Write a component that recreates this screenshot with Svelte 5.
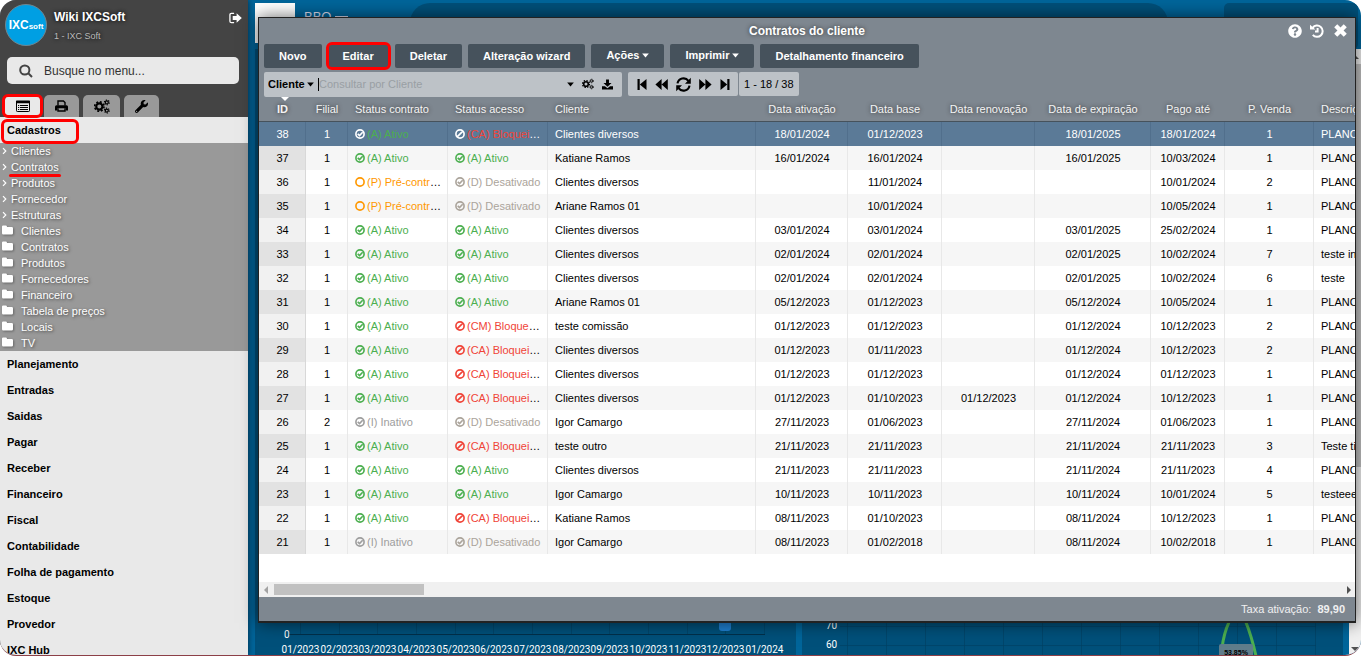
<script lang="ts">
  type Icon = { box: string; fill?: string; stroke?: string; width?: number };

  const icons: Record<string, Icon> = {
    signout: {
      box: "0 0 14 12",
      fill: "M4 3.8h4.2V.8L13.8 6l-5.6 5.2v-3H4z",
      stroke: "M5.5 1H2.6Q1 1 1 2.6v6.8Q1 11 2.6 11h2.9",
      width: 1.4,
    },
    search: { box: "0 0 14 14", stroke: "M10.4 6a4.6 4.6 0 1 1-9.2 0a4.6 4.6 0 0 1 9.2 0M9.3 9.3L13 13", width: 2 },
    list: {
      box: "0 0 14 12",
      fill: "M0 1.2Q0 .5.7.5h12.6q.7 0 .7.7v2H0zM2 5h1.2v1H2zM4 5h8v1H4zM2 7h1.2v1H2zM4 7h8v1H4zM2 9h1.2v1H2zM4 9h8v1H4z",
      stroke: "M.5 2v8.7q0 .8.8.8h11.4q.8 0 .8-.8V2",
      width: 1,
    },
    print: {
      box: "0 0 13 12",
      fill: "M0 6.8Q0 5.3 1.5 5.3h10Q13 5.3 13 6.8v3.6h-2.4V8.2H2.4v2.2H0z",
      stroke: "M3 5.5V1h5.4L10 2.6v2.9M3 8.2V11h7V8.2",
      width: 1.4,
    },
    wrench: {
      box: "0 0 512 512",
      fill: "M507.73 109.1c-2.24-9.03-13.54-12.09-20.12-5.51l-74.36 74.36-67.88-11.31-11.31-67.88 74.36-74.36c6.62-6.62 3.43-17.9-5.66-20.16-47.38-11.74-99.55.91-136.58 37.93-39.64 39.64-50.55 97.1-34.05 147.2L18.74 402.76c-24.99 24.99-24.99 65.51 0 90.5 24.99 24.99 65.51 24.99 90.5 0l213.21-213.21c50.12 16.71 107.47 5.68 147.37-34.22 37.07-37.07 49.7-89.32 37.91-136.73zM64 472c-13.25 0-24-10.75-24-24 0-13.26 10.75-24 24-24s24 10.74 24 24c0 13.25-10.75 24-24 24z",
    },
    chevron: { box: "0 0 5 8", stroke: "M1 1.2L3.8 4L1 6.8", width: 1.2 },
    folder: { box: "0 0 12 10", fill: "M0 1.2Q0 0 1.2 0h3q1 0 1.2 1.2V1.6h5.2Q12 1.6 12 3v5.6Q12 10 10.6 10H1.4Q0 10 0 8.6z" },
    caret: { box: "0 0 8 5", fill: "M.2.3h7.6L4 4.7z" },
    help: {
      box: "0 0 512 512",
      fill: "M504 256c0 136.997-111.043 248-248 248S8 392.997 8 256C8 119.083 119.043 8 256 8s248 111.083 248 248zM262.655 90c-54.497 0-89.255 22.957-116.549 63.758-3.536 5.286-2.353 12.415 2.715 16.258l34.699 26.31c5.205 3.947 12.621 3.008 16.665-2.122 17.864-22.658 30.113-35.797 57.303-35.797 20.429 0 45.698 13.148 45.698 32.958 0 14.976-12.363 22.667-32.534 33.976C247.128 238.528 216 254.941 216 296v4c0 6.627 5.373 12 12 12h56c6.627 0 12-5.373 12-12v-1.333c0-28.462 83.186-29.647 83.186-106.667 0-58.002-60.165-102-116.531-102zM256 338c-25.365 0-46 20.635-46 46 0 25.364 20.635 46 46 46s46-20.636 46-46c0-25.365-20.635-46-46-46z",
    },
    history: { box: "0 0 14 14", fill: "M0 .8L5.4 5.6H0z", stroke: "M2.6 3.8A5.6 5.6 0 1 1 2.8 10.8M7.6 4v3.6H5", width: 2 },
    close: { box: "0 0 12 12", stroke: "M1.6 1.6L10.4 10.4M10.4 1.6L1.6 10.4", width: 4 },
    download: { box: "0 0 12 12", fill: "M4.4.5h3.2v3.8h2.8L6 8.5 1.6 4.3h2.8zM0 7.8h3.2L6 10.2l2.8-2.4H12v3.7H0z" },
    first: { box: "0 0 10 12", fill: "M.5.5h2.2v11H.5zM9.5.5v11L2.8 6z" },
    prev: { box: "0 0 13 12", fill: "M6.6.5v11L.4 6zM12.8.5v11L6.6 6z" },
    next: { box: "0 0 13 12", fill: "M.2.5L6.4 6 .2 11.5zM6.4.5L12.6 6l-6.2 5.5z" },
    last: { box: "0 0 10 12", fill: "M7.3.5h2.2v11H7.3zM.5.5L7.2 6 .5 11.5z" },
    refresh: {
      box: "0 0 14 14",
      fill: "M13.8.8v5.4H8.4zM.2 13.2V7.8h5.4z",
      stroke: "M1.4 6A5.7 5.7 0 0 1 11.6 3.6M12.6 8A5.7 5.7 0 0 1 2.4 10.4",
      width: 2,
    },
    check: { box: "0 0 11 11", stroke: "M10 5.5a4.5 4.5 0 1 1-9 0a4.5 4.5 0 0 1 9 0M3 5.3L5 7.2 8.4 3.6", width: 1.8 },
    ban: { box: "0 0 11 11", stroke: "M10 5.5a4.5 4.5 0 1 1-9 0a4.5 4.5 0 0 1 9 0M2.6 8.4L8.4 2.6", width: 1.8 },
    circle: { box: "0 0 11 11", stroke: "M10 5.5a4.5 4.5 0 1 1-9 0a4.5 4.5 0 0 1 9 0", width: 1.8 },
  };

  const routines = ["Clientes", "Contratos", "Produtos", "Fornecedor", "Estruturas"];
  const folders = ["Clientes", "Contratos", "Produtos", "Fornecedores", "Financeiro", "Tabela de preços", "Locais", "TV"];
  const sections = [
    "Planejamento", "Entradas", "Saidas", "Pagar", "Receber", "Financeiro",
    "Fiscal", "Contabilidade", "Folha de pagamento", "Estoque", "Provedor", "IXC Hub",
  ];

  const buttons = [
    { label: "Novo" },
    { label: "Editar", marked: true },
    { label: "Deletar" },
    { label: "Alteração wizard" },
    { label: "Ações", menu: true },
    { label: "Imprimir", menu: true },
    { label: "Detalhamento financeiro" },
  ];

  const columns = [
    { label: "ID", width: 47 },
    { label: "Filial", width: 42 },
    { label: "Status contrato", width: 100, left: true },
    { label: "Status acesso", width: 100, left: true },
    { label: "Cliente", width: 208, left: true },
    { label: "Data ativação", width: 92 },
    { label: "Data base", width: 94 },
    { label: "Data renovação", width: 93 },
    { label: "Data de expiração", width: 116 },
    { label: "Pago até", width: 74 },
    { label: "P. Venda", width: 89 },
    { label: "Descrição", width: 240, left: true },
  ];

  const status: Record<string, { icon: string; text: string; tone: string }> = {
    A: { icon: "check", text: "(A) Ativo", tone: "green" },
    P: { icon: "circle", text: "(P) Pré-contrato", tone: "orange" },
    I: { icon: "check", text: "(I) Inativo", tone: "gray" },
    D: { icon: "check", text: "(D) Desativado", tone: "sand" },
    CA: { icon: "ban", text: "(CA) Bloqueio A.", tone: "red" },
    CM: { icon: "ban", text: "(CM) Bloqueio M.", tone: "red" },
  };

  // id, filial, contrato, acesso, cliente, ativação, base, renovação, expiração, pago até, venda, descrição
  const rows = [
    ["38", "1", "A", "CA", "Clientes diversos", "18/01/2024", "01/12/2023", "", "18/01/2025", "18/01/2024", "1", "PLANO"],
    ["37", "1", "A", "A", "Katiane Ramos", "16/01/2024", "16/01/2024", "", "16/01/2025", "10/03/2024", "1", "PLANO"],
    ["36", "1", "P", "D", "Clientes diversos", "", "11/01/2024", "", "", "10/01/2024", "2", "PLANO"],
    ["35", "1", "P", "D", "Ariane Ramos 01", "", "10/01/2024", "", "", "10/05/2024", "1", "PLANO"],
    ["34", "1", "A", "A", "Clientes diversos", "03/01/2024", "03/01/2024", "", "03/01/2025", "25/02/2024", "1", "PLANO"],
    ["33", "1", "A", "A", "Clientes diversos", "02/01/2024", "02/01/2024", "", "02/01/2025", "10/02/2024", "7", "teste internet"],
    ["32", "1", "A", "A", "Clientes diversos", "02/01/2024", "02/01/2024", "", "02/01/2025", "10/02/2024", "6", "teste"],
    ["31", "1", "A", "A", "Ariane Ramos 01", "05/12/2023", "01/12/2023", "", "05/12/2024", "10/05/2024", "1", "PLANO"],
    ["30", "1", "A", "CM", "teste comissão", "01/12/2023", "01/12/2023", "", "01/12/2024", "10/12/2023", "2", "PLANO"],
    ["29", "1", "A", "CA", "Clientes diversos", "01/12/2023", "01/11/2023", "", "01/12/2024", "10/12/2023", "2", "PLANO"],
    ["28", "1", "A", "CA", "Clientes diversos", "01/12/2023", "01/12/2023", "", "01/12/2024", "01/12/2023", "1", "PLANO"],
    ["27", "1", "A", "CA", "Clientes diversos", "01/12/2023", "01/10/2023", "01/12/2023", "01/12/2024", "10/12/2023", "1", "PLANO"],
    ["26", "2", "I", "D", "Igor Camargo", "27/11/2023", "01/06/2023", "", "27/11/2024", "01/06/2023", "1", "PLANO"],
    ["25", "1", "A", "CA", "teste outro", "21/11/2023", "21/11/2023", "", "21/11/2024", "21/11/2023", "3", "Teste tipo"],
    ["24", "1", "A", "A", "Clientes diversos", "21/11/2023", "21/11/2023", "", "21/11/2024", "21/11/2023", "4", "PLANO"],
    ["23", "1", "A", "A", "Igor Camargo", "10/11/2023", "10/11/2023", "", "10/11/2024", "10/01/2024", "5", "testeeee"],
    ["22", "1", "A", "CA", "Katiane Ramos", "08/11/2023", "01/10/2023", "", "08/11/2024", "10/12/2023", "1", "PLANO"],
    ["21", "1", "I", "D", "Igor Camargo", "08/11/2023", "01/02/2018", "", "08/11/2024", "10/02/2018", "1", "PLANO"],
  ];

  const months = [
    "01/2023", "02/2023", "03/2023", "04/2023", "05/2023", "06/2023", "07/2023",
    "08/2023", "09/2023", "10/2023", "11/2023", "12/2023", "01/2024",
  ];
  const monthX = (i: number) => 45 + Math.round((i * 464) / 12) + 0.5;

  let selected = $state("38");
  let menuQuery = $state("");
  let query = $state("");
</script>

{#snippet icon(name: string, width: number, height: number)}
  {@const i = icons[name]}
  <svg {width} {height} viewBox={i.box} aria-hidden="true">
    {#if i.fill}<path d={i.fill} fill="currentColor" />{/if}
    {#if i.stroke}<path d={i.stroke} fill="none" stroke="currentColor" stroke-width={i.width} />{/if}
  </svg>
{/snippet}

{#snippet cogs(width: number, height: number)}
  <svg {width} {height} viewBox="0 0 15 14" fill="none" stroke="currentColor" aria-hidden="true">
    <circle cx="5" cy="7" r="2.9" stroke-width="2" />
    <circle cx="5" cy="7" r="4.4" stroke-width="1.5" stroke-dasharray="1.8 1.65" />
    <circle cx="12" cy="3.2" r="1.4" stroke-width="1.1" />
    <circle cx="12" cy="3.2" r="2.3" stroke-width="1" stroke-dasharray="1.2 1.2" />
    <circle cx="12" cy="10.8" r="1.4" stroke-width="1.1" />
    <circle cx="12" cy="10.8" r="2.3" stroke-width="1" stroke-dasharray="1.2 1.2" />
  </svg>
{/snippet}

<div class="app">
  <aside class="sidebar">
    <header class="profile">
      <div class="avatar"><b>IXC</b><span>soft</span></div>
      <div class="who">
        <strong>Wiki IXCSoft</strong>
        <small>1 - IXC Soft</small>
      </div>
      <button class="plain logout" aria-label="Sair">{@render icon("signout", 13, 12)}</button>
    </header>

    <label class="menu-search">
      {@render icon("search", 14, 14)}
      <input type="text" placeholder="Busque no menu..." aria-label="Busque no menu" bind:value={menuQuery} />
    </label>

    <nav class="tabs">
      <button class="tab active marked" aria-label="Menu">{@render icon("list", 14, 12)}</button>
      <button class="tab" aria-label="Relatórios">{@render icon("print", 13, 12)}</button>
      <button class="tab wide" aria-label="Configurações">{@render cogs(16, 15)}</button>
      <button class="tab" aria-label="Ferramentas">{@render icon("wrench", 13, 13)}</button>
    </nav>

    <nav class="menu">
      <a class="section open" href="#cadastros"><span class="marked">Cadastros</span></a>
      <div class="submenu">
        {#each routines as name}
          <a href="#{name}" class="routine">
            {@render icon("chevron", 5, 8)}<span class:underlined={name === "Contratos"}>{name}</span>
          </a>
        {/each}
        {#each folders as name}
          <a href="#pasta-{name}" class="folder">{@render icon("folder", 11, 10)}<span>{name}</span></a>
        {/each}
      </div>
      {#each sections as name}
        <a class="section" href="#{name}">{name}</a>
      {/each}
    </nav>
  </aside>

  <main class="desktop">
    <div class="topbar">
      <div class="brand"></div>
      <div class="brand-name">BBO<span class="dash"></span></div>
      <div class="pill"></div>
      <div class="corner"></div>
    </div>
    <div class="dashboard">
      <div class="cards">
        <section class="card">
          <svg width="541" height="33" viewBox="0 0 541 33">
            {#each months as month, i}
              <line x1={monthX(i)} x2={monthX(i)} y1="0" y2="13" stroke="#003f60" stroke-opacity=".6" />
              <text x={monthX(i)} y="31" text-anchor="middle">{month}</text>
            {/each}
            <line x1="34" x2="510" y1="12.5" y2="12.5" stroke="#00304a" />
            <text x="29" y="16">0</text>
            <rect x="464" y="-5" width="12" height="14" rx="3" fill="#1f7fd0" />
          </svg>
        </section>
        <section class="card">
          <svg width="541" height="33" viewBox="0 0 541 33">
            {#each months as _, i}
              <line x1={45.5 + i * 39} x2={45.5 + i * 39} y1="0" y2="33" stroke="#003f60" stroke-opacity=".6" />
            {/each}
            <line x1="38" x2="514" y1="4.5" y2="4.5" stroke="#003f60" stroke-opacity=".6" />
            <line x1="38" x2="514" y1="23.5" y2="23.5" stroke="#003f60" stroke-opacity=".6" />
            <text x="24" y="7">70</text>
            <text x="24" y="26">60</text>
            <path d="M420 26Q422 10 428-2M443-2Q449 12 454 34" fill="none" stroke="#4caf50" stroke-width="3" />
            <rect x="417" y="22" width="34" height="16" rx="2" fill="#607d8b" />
            <text x="434" y="33" text-anchor="middle" class="tag">53,85%</text>
          </svg>
        </section>
      </div>
      <div class="page-scroll">
        <span class="arrow up"></span>
        <span class="track"></span>
        <span class="arrow down"></span>
      </div>
    </div>
  </main>

  <section class="window">
    <header class="titlebar">
      <h1>Contratos do cliente</h1>
      <div class="window-actions">
        <button class="plain" aria-label="Ajuda">{@render icon("help", 14, 14)}</button>
        <button class="plain" aria-label="Histórico">{@render icon("history", 14, 14)}</button>
        <button class="plain close" aria-label="Fechar">{@render icon("close", 13, 13)}</button>
      </div>
    </header>

    <div class="toolbar">
      {#each buttons as b}
        <button class="action" class:marked={b.marked} class:drop={b.menu}>
          {b.label}{#if b.menu}{@render icon("caret", 7, 5)}{/if}
        </button>
      {/each}
    </div>

    <div class="filters">
      <div class="group query">
        <select aria-label="Campo de busca"><option>Cliente</option></select>
        {@render icon("caret", 7, 5)}
        <span class="cursor"></span>
        <input type="text" placeholder="Consultar por Cliente" aria-label="Consultar por Cliente" bind:value={query} />
        <button class="plain" aria-label="Opções">{@render icon("caret", 7, 5)}</button>
        <button class="plain" aria-label="Configurar grid">{@render cogs(12, 12)}</button>
        <button class="plain" aria-label="Exportar">{@render icon("download", 11, 11)}</button>
      </div>
      <div class="pager">
        <div class="group pages">
          <button class="plain" aria-label="Primeira">{@render icon("first", 10, 13)}</button>
          <button class="plain" aria-label="Anterior">{@render icon("prev", 13, 13)}</button>
          <button class="plain" aria-label="Atualizar">{@render icon("refresh", 15, 15)}</button>
          <button class="plain" aria-label="Próxima">{@render icon("next", 13, 13)}</button>
          <button class="plain" aria-label="Última">{@render icon("last", 10, 13)}</button>
        </div>
        <span class="group count">1 - 18 / 38</span>
      </div>
    </div>

    <div class="grid">
      <table>
        <colgroup>
          {#each columns as c}<col style="width: {c.width}px" />{/each}
        </colgroup>
        <thead>
          <tr>
            {#each columns as c, i}
              <th class:left={c.left} class:sorted={i === 0}>{c.label}</th>
            {/each}
          </tr>
        </thead>
        <tbody>
          {#each rows as row}
            <tr class:selected={row[0] === selected} onclick={() => (selected = row[0])}>
              {#each row as value, i}
                <td class:left={columns[i].left}>
                  {#if i === 2 || i === 3}
                    {@const s = status[value]}
                    <span class="status {s.tone}">{@render icon(s.icon, 10, 10)}{s.text}</span>
                  {:else}
                    {value}
                  {/if}
                </td>
              {/each}
            </tr>
          {/each}
        </tbody>
      </table>
    </div>

    <div class="hscroll">
      <span class="arrow prev"></span>
      <span class="thumb"></span>
      <span class="arrow next"></span>
    </div>

    <footer class="totals">Taxa ativação: <b>89,90</b></footer>
  </section>
</div>

<style>
  :global(body) {
    background: #fff;
  }

  .app {
    position: relative;
    box-sizing: border-box;
    display: flex;
    height: 100vh;
    overflow: hidden;
    border-bottom: 1px solid #8c4047;
    border-radius: 16px;
    font: 11px/16px "Liberation Sans", Arial, sans-serif;
    color: #000;
  }

  svg {
    display: block;
    flex: none;
  }

  button,
  input,
  select {
    font: inherit;
    color: inherit;
  }

  a {
    color: inherit;
    text-decoration: none;
  }

  .plain {
    display: flex;
    padding: 0;
    border: 0;
    background: none;
    cursor: pointer;
  }

  .marked {
    position: relative;
  }

  .marked::after {
    content: "";
    position: absolute;
    inset: -2px;
    border: 3px solid #f00;
    border-radius: 6px;
    pointer-events: none;
  }

  /* sidebar */
  .sidebar {
    position: relative;
    z-index: 1;
    flex: none;
    width: 248px;
    overflow: hidden;
    background: #444;
    box-shadow: 0 0 6px #002a42;
  }

  .profile {
    display: flex;
    align-items: flex-start;
    box-sizing: border-box;
    height: 57px;
    padding: 4px 6px 0 5px;
    color: #fff;
  }

  .avatar {
    display: flex;
    align-items: baseline;
    justify-content: center;
    box-sizing: border-box;
    width: 42px;
    height: 42px;
    border: 1px solid #6f8791;
    border-radius: 50%;
    background: #009fe3;
    line-height: 40px;
    font-size: 8px;
    font-weight: bold;
  }

  .avatar b {
    font-size: 12px;
  }

  .who {
    display: flex;
    flex: 1;
    flex-direction: column;
    gap: 4px;
    padding: 5px 0 0 7px;
    text-shadow: 0 0 4px #000;
  }

  .who strong {
    font-size: 12px;
  }

  .who small {
    font-size: 9px;
    line-height: 14px;
    color: #bbb;
  }

  .logout {
    padding-top: 8px;
  }

  .menu-search {
    display: flex;
    align-items: center;
    gap: 11px;
    height: 27px;
    margin: 0 9px 11px 7px;
    padding-left: 12px;
    border-radius: 5px;
    background: #e9e9e9;
    color: #444;
  }

  .menu-search input {
    flex: 1;
    min-width: 0;
    padding: 0;
    border: 0;
    outline: 0;
    background: none;
    font-size: 12px;
  }

  .menu-search input::placeholder {
    color: #333;
  }

  .tabs {
    display: flex;
    gap: 4px;
    padding-left: 5px;
  }

  .tab {
    display: flex;
    align-items: center;
    justify-content: center;
    width: 35px;
    height: 22px;
    padding: 0;
    border: 0;
    border-radius: 5px 5px 0 0;
    background: #999;
    cursor: pointer;
  }

  .tab.wide {
    width: 37px;
  }

  .tab.active {
    background: #e9e9e9;
  }

  .tab.marked::after {
    inset: -1px -3px;
  }

  .menu {
    background: #e9e9e9;
  }

  .section {
    display: block;
    height: 26px;
    padding-left: 7px;
    line-height: 26px;
    font-weight: bold;
  }

  .section .marked {
    display: inline-block;
  }

  .section .marked::after {
    inset: 2px -18px -1px -6px;
  }

  .submenu {
    background: #999;
    color: #fff;
    text-shadow: 1px 1px 3px #444;
  }

  .routine,
  .folder {
    display: flex;
    align-items: center;
    height: 16px;
    padding-left: 2px;
  }

  .routine {
    gap: 4px;
  }

  .folder {
    gap: 8px;
  }

  .folder svg {
    margin-bottom: 2px;
    filter: drop-shadow(1px 1px 1px #666);
  }

  .underlined {
    position: relative;
  }

  .underlined::after {
    content: "";
    position: absolute;
    inset: auto -2px -2px;
    height: 3px;
    border-radius: 2px;
    background: #f00;
  }

  /* dashboard behind the window */
  .desktop {
    display: flex;
    flex: 1;
    flex-direction: column;
    min-width: 0;
    padding-left: 7px;
    background: #00659a;
  }

  .topbar {
    display: flex;
    height: 46px;
    padding: 3px 3px 0 0;
  }

  .brand {
    width: 40px;
    height: 40px;
    background: #fff;
  }

  .brand-name {
    display: flex;
    gap: 4px;
    width: 106px;
    padding: 6px 0 0 9px;
    color: #dde;
    font-size: 13px;
  }

  .dash {
    width: 13px;
    height: 1px;
    margin-top: 7px;
    background: #dde;
  }

  .pill {
    flex: 1;
    border-radius: 20px;
    background: #00507a;
  }

  .corner {
    width: 134px;
    margin-left: 56px;
    border-radius: 5px;
    background: #00507a;
  }

  .dashboard {
    display: flex;
    flex: 1;
    min-height: 0;
  }

  .cards {
    display: flex;
    flex: 1;
    gap: 6px;
    min-width: 0;
    padding-right: 6px;
  }

  .card {
    display: flex;
    flex: 1;
    align-items: flex-end;
    min-width: 0;
    overflow: hidden;
    background: #00507a;
  }

  .card text {
    font: 10px Roboto, sans-serif;
    fill: #fff;
  }

  .card .tag {
    font: bold 7px "Liberation Sans", sans-serif;
    fill: #000;
  }

  .page-scroll {
    display: flex;
    flex-direction: column;
    align-items: center;
    justify-content: space-between;
    width: 12px;
    background: #f0f0f0;
  }

  .page-scroll .track {
    flex: 1;
    width: 12px;
    margin-bottom: 180px;
    background: #c1c1c1;
  }

  .arrow {
    border: 4px solid transparent;
  }

  .arrow.up {
    border-bottom-color: #505050;
    margin: 2px 0 5px;
  }

  .arrow.down {
    border-top-color: #505050;
  }

  /* window */
  .window {
    position: absolute;
    z-index: 2;
    inset: 17px 5px 32px 258px;
    display: flex;
    flex-direction: column;
    border: 1px solid #222;
    border-bottom-width: 2px;
    background: #7e8790;
    box-shadow: 0 0 16px rgba(0, 0, 0, 0.6);
  }

  .titlebar {
    position: relative;
    display: flex;
    align-items: center;
    justify-content: center;
    height: 26px;
    color: #fff;
  }

  .titlebar h1 {
    margin: 0;
    font-size: 12px;
    text-shadow: 0 0 4px #333;
  }

  .window-actions {
    position: absolute;
    right: 8px;
    display: flex;
    gap: 8px;
  }

  .window-actions .close {
    margin-left: 2px;
  }

  .toolbar {
    display: flex;
    gap: 6px;
    padding: 0 5px 4px;
  }

  .action {
    display: flex;
    align-items: center;
    gap: 3px;
    height: 24px;
    padding: 0 15px;
    border: 0;
    border-radius: 2px;
    background: #46525c;
    color: #fff;
    font-weight: bold;
    cursor: pointer;
  }

  .action.drop {
    padding-bottom: 2px;
  }

  .filters {
    display: flex;
    gap: 6px;
    padding: 0 5px;
  }

  .group {
    display: flex;
    align-items: center;
    height: 24px;
    border-radius: 2px;
    background: #bdc2c7;
    color: #000;
  }

  .query {
    box-sizing: border-box;
    width: 358px;
    height: 25px;
    padding: 0 9px 1px 4px;
  }

  .query select {
    margin-right: 2px;
    padding: 0;
    border: 0;
    appearance: none;
    background: none;
    font-weight: bold;
  }

  .query input {
    flex: 1;
    min-width: 0;
    padding: 0;
    border: 0;
    outline: 0;
    background: none;
  }

  .query input::placeholder {
    color: #999fa4;
  }

  .query .plain {
    margin-left: 8px;
  }

  .cursor {
    width: 1px;
    height: 13px;
    margin-left: 4px;
    background: #000;
  }

  .pager {
    display: flex;
    gap: 1px;
  }

  .pages {
    gap: 8px;
    padding: 0 8px 0 9px;
  }

  .count {
    padding: 0 5px;
  }

  .grid {
    flex: 1;
    min-height: 0;
    overflow: hidden;
    background: #fff;
  }

  table {
    width: 1295px;
    table-layout: fixed;
    border-collapse: separate;
    border-spacing: 0;
  }

  th,
  td {
    height: 24px;
    padding: 0 6px 0 7px;
    overflow: hidden;
    line-height: 24px;
    text-align: center;
    text-overflow: ellipsis;
    white-space: nowrap;
  }

  th {
    padding: 0;
    border-bottom: 1px solid #46525c;
    background: #7e8790;
    color: #f4f4f4;
    font-weight: normal;
    text-shadow: 0 0 4px #333;
  }

  th.left {
    padding-left: 7px;
  }

  .left {
    text-align: left;
  }

  .sorted {
    position: relative;
    font-weight: bold;
  }

  .sorted::before {
    content: "";
    position: absolute;
    top: 0;
    left: 22px;
    border: 4px solid transparent;
    border-top-color: #fff;
    border-bottom: 0;
  }

  td {
    border-right: 1px solid #e8e8e8;
    background: #fff;
  }

  td:first-child {
    border-right-color: #d8d8d8;
    background: #f1f1f1;
  }

  tr:nth-child(even) td {
    background: #f6f6f6;
  }

  tr:nth-child(even) td:first-child {
    background: #e2e2e2;
  }

  tbody tr.selected td {
    border-right-color: #516f8c;
    background: #5b7a97;
    color: #fff;
  }

  .status svg {
    display: inline-block;
    margin-right: 2px;
    vertical-align: -1px;
  }

  .selected .status svg {
    color: #fff;
  }

  .green { color: #4caf50; }
  .orange { color: #ff9800; }
  .gray { color: #9e9e9e; }
  .sand { color: #aba49b; }
  .red { color: #f04438; }

  .hscroll {
    display: flex;
    align-items: center;
    height: 15px;
    background: #f0f0f0;
  }

  .hscroll .thumb {
    width: 150px;
    height: 11px;
    background: #c1c1c1;
  }

  .arrow.prev {
    border-right-color: #a3a3a3;
    margin: 0 6px 0 1px;
  }

  .arrow.next {
    border-left-color: #505050;
    margin-left: auto;
  }

  .totals {
    padding: 4px 10px 4px 0;
    height: 16px;
    color: #f0f0f0;
    text-align: right;
  }

  .totals b {
    margin-left: 3px;
  }
</style>
